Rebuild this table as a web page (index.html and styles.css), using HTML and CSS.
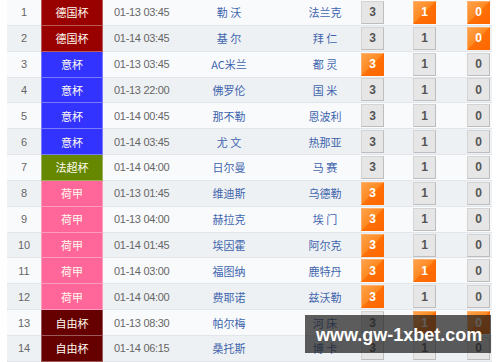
FILE: index.html
```html
<!DOCTYPE html>
<html lang="zh">
<head>
<meta charset="utf-8">
<link rel="stylesheet" href="styles.css">
</head>
<body>
<div class="wrap">
  <div class="table">
    <div class="row odd"><span class="num">1</span><span class="lg dfb">德国杯</span><span class="time">01-13 03:45</span><span class="home">勒 沃</span><span class="away">法兰克</span><span class="sc">3</span><span class="sc s2 on">1</span><span class="sc s3 on">0</span></div>
    <div class="row even"><span class="num">2</span><span class="lg dfb">德国杯</span><span class="time">01-14 03:45</span><span class="home">基 尔</span><span class="away">拜 仁</span><span class="sc">3</span><span class="sc s2">1</span><span class="sc s3 on">0</span></div>
    <div class="row odd"><span class="num">3</span><span class="lg ita">意杯</span><span class="time">01-13 03:45</span><span class="home">AC米兰</span><span class="away">都 灵</span><span class="sc on">3</span><span class="sc s2">1</span><span class="sc s3">0</span></div>
    <div class="row even"><span class="num">4</span><span class="lg ita">意杯</span><span class="time">01-13 22:00</span><span class="home">佛罗伦</span><span class="away">国 米</span><span class="sc">3</span><span class="sc s2">1</span><span class="sc s3">0</span></div>
    <div class="row odd"><span class="num">5</span><span class="lg ita">意杯</span><span class="time">01-14 00:45</span><span class="home">那不勒</span><span class="away">恩波利</span><span class="sc">3</span><span class="sc s2">1</span><span class="sc s3">0</span></div>
    <div class="row even"><span class="num">6</span><span class="lg ita">意杯</span><span class="time">01-14 03:45</span><span class="home">尤 文</span><span class="away">热那亚</span><span class="sc">3</span><span class="sc s2">1</span><span class="sc s3">0</span></div>
    <div class="row odd"><span class="num">7</span><span class="lg fra">法超杯</span><span class="time">01-14 04:00</span><span class="home">日尔曼</span><span class="away">马 赛</span><span class="sc">3</span><span class="sc s2">1</span><span class="sc s3">0</span></div>
    <div class="row even"><span class="num">8</span><span class="lg ned">荷甲</span><span class="time">01-13 01:45</span><span class="home">维迪斯</span><span class="away">乌德勒</span><span class="sc on">3</span><span class="sc s2">1</span><span class="sc s3">0</span></div>
    <div class="row odd"><span class="num">9</span><span class="lg ned">荷甲</span><span class="time">01-13 04:00</span><span class="home">赫拉克</span><span class="away">埃 门</span><span class="sc on">3</span><span class="sc s2">1</span><span class="sc s3">0</span></div>
    <div class="row even"><span class="num">10</span><span class="lg ned">荷甲</span><span class="time">01-14 01:45</span><span class="home">埃因霍</span><span class="away">阿尔克</span><span class="sc on">3</span><span class="sc s2">1</span><span class="sc s3">0</span></div>
    <div class="row odd"><span class="num">11</span><span class="lg ned">荷甲</span><span class="time">01-14 03:00</span><span class="home">福图纳</span><span class="away">鹿特丹</span><span class="sc on">3</span><span class="sc s2 on">1</span><span class="sc s3">0</span></div>
    <div class="row even"><span class="num">12</span><span class="lg ned">荷甲</span><span class="time">01-14 04:00</span><span class="home">费耶诺</span><span class="away">兹沃勒</span><span class="sc on">3</span><span class="sc s2">1</span><span class="sc s3">0</span></div>
    <div class="row odd"><span class="num">13</span><span class="lg lib">自由杯</span><span class="time">01-13 08:30</span><span class="home">帕尔梅</span><span class="away">河 床</span><span class="sc">3</span><span class="sc s2 on">1</span><span class="sc s3 on">0</span></div>
    <div class="row even"><span class="num">14</span><span class="lg lib">自由杯</span><span class="time">01-14 06:15</span><span class="home">桑托斯</span><span class="away">博 卡</span><span class="sc">3</span><span class="sc s2">1</span><span class="sc s3">0</span></div>
  </div>
  <div class="watermark">www.gw-1xbet.com</div>
</div>
</body>
</html>
```

FILE: styles.css
```css
html, body {
  margin: 0;
  padding: 0;
  background: #ffffff;
}
.wrap {
  position: relative;
  width: 500px;
  height: 362px;
  overflow: hidden;
}
.table {
  margin-left: 7px;
  width: 485px;
  display: flex;
  flex-direction: column;
}
.row {
  height: 25.857px;
  box-sizing: border-box;
  border-bottom: 1px solid #e2e6eb;
  display: grid;
  grid-template-columns: 34px 62px 70px 112px 76px 23px 29px 23px 31px 23px 2px;
  align-items: center;
  font-family: "Liberation Sans", "Noto Sans CJK SC", sans-serif;
  font-size: 11px;
}
.odd { background: #f9fafc; }
.even { background: #eef1f3; }
.num {
  text-align: center;
  color: #666;
}
.lg {
  align-self: stretch;
  display: flex;
  align-items: center;
  justify-content: center;
  color: #fffbf0;
  font-family: "Noto Sans CJK SC", sans-serif;
  font-size: 11px;
  margin-bottom: -1px;
  border-left: 1px solid rgba(255,255,255,0.35);
  border-right: 1px solid rgba(255,255,255,0.35);
  border-bottom: 1px solid rgba(255,255,255,0.35);
}
.dfb { background: #990000; }
.ita { background: #3333ff; }
.fra { background: #668800; }
.ned { background: #ff6699; }
.lib { background: #660000; }
.time {
  padding-left: 11px;
  color: #666;
  letter-spacing: -0.3px;
  white-space: nowrap;
}
.home, .away {
  text-align: center;
  color: #3f65ad;
  font-family: "Noto Sans CJK SC", sans-serif;
  font-size: 11px;
  white-space: nowrap;
}
.away { padding-left: 4px; }
.sc {
  height: 23px;
  box-sizing: border-box;
  display: flex;
  align-items: center;
  justify-content: center;
  font-weight: bold;
  font-size: 12px;
  color: #555;
  background: #e6e6e6;
  border: 1px solid #d4d4d4;
  border-right-color: #bdbdbd;
  border-bottom-color: #bdbdbd;
}
.s2 { grid-column: 8; }
.s3 { grid-column: 10; }
.sc.on {
  color: #fff;
  background: linear-gradient(135deg, #ffa24a 0%, #ff8a22 48%, #ff7008 52%, #ff6600 100%);
  border-color: #ffae6a #ff6a00 #ff6a00 #ffae6a;
}
.watermark {
  position: absolute;
  left: 305px;
  top: 315px;
  width: 186px;
  height: 38px;
  box-sizing: border-box;
  background: rgba(30, 30, 30, 0.72);
  color: #ffffff;
  font-family: "Liberation Sans", sans-serif;
  font-weight: bold;
  font-size: 18px;
  line-height: 24px;
  padding-top: 8px;
  padding-left: 11px;
  white-space: nowrap;
}
```
